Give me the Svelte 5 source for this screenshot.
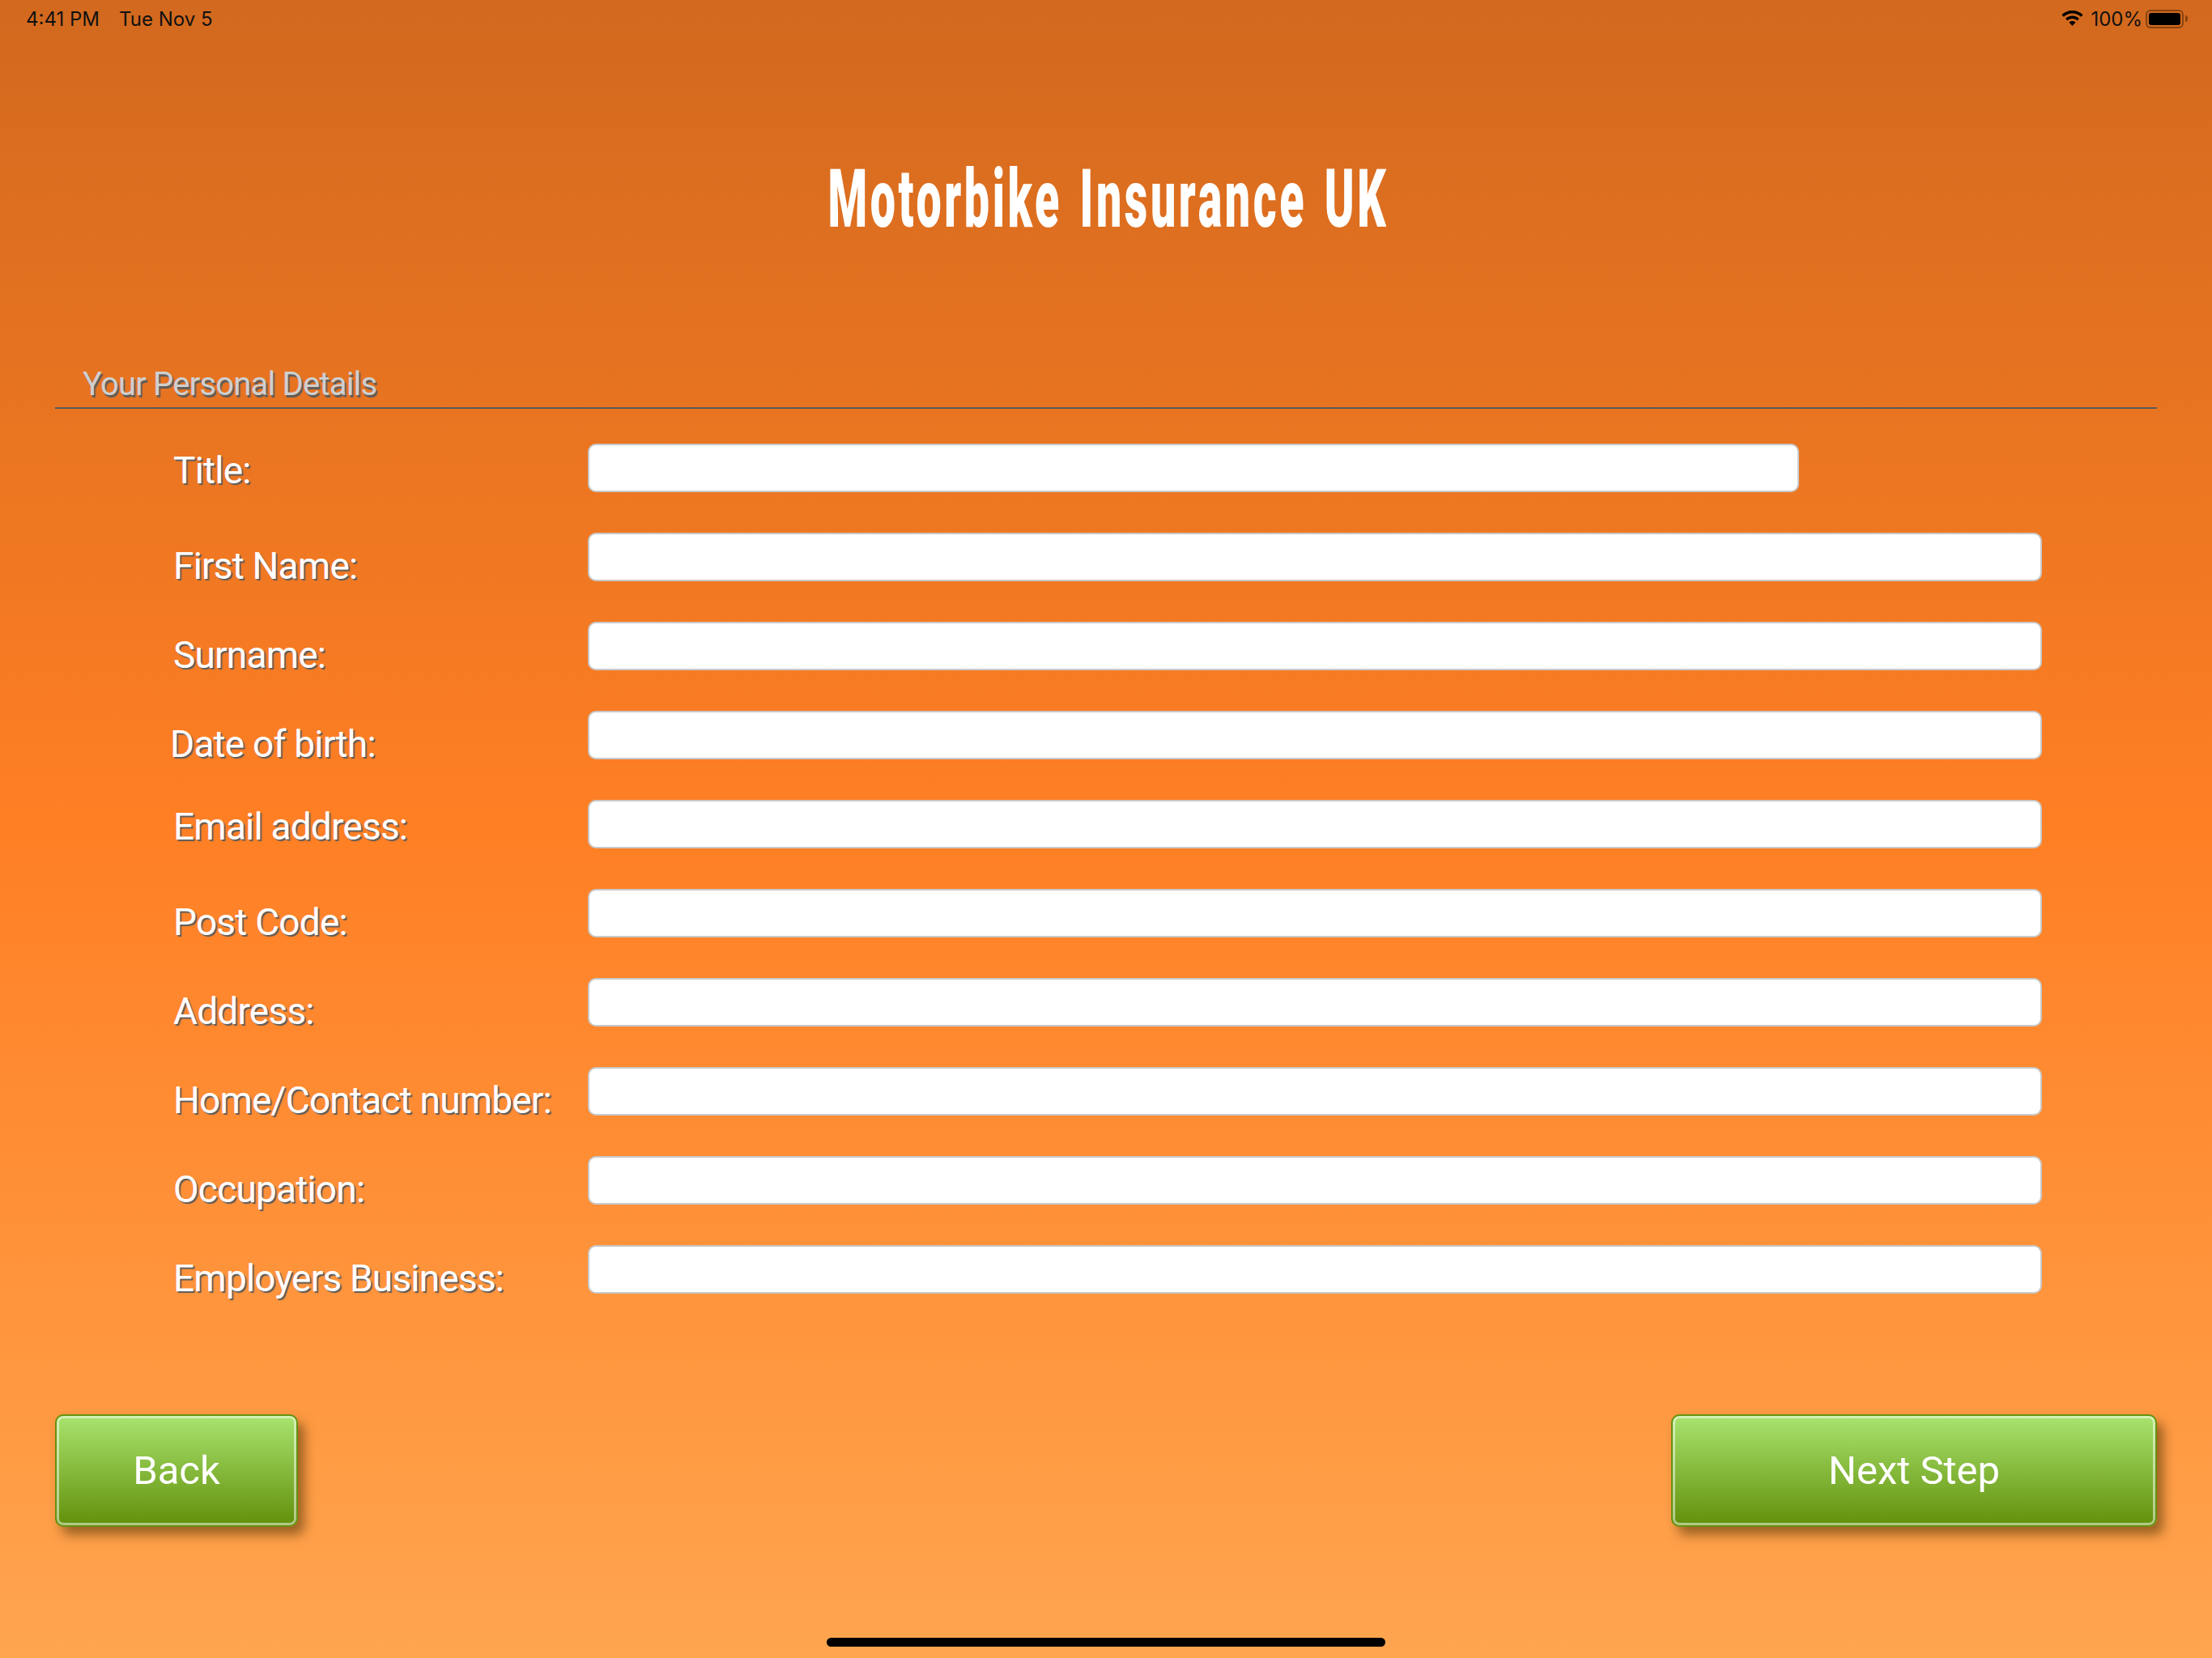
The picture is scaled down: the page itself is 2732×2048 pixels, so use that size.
<script>
  const rows = [
    { label: 'Title:', short: true, tight: true },
    { label: 'First Name:' },
    { label: 'Surname:' },
    { label: 'Date of birth:', nudge: true },
    { label: 'Email address:', tight: true },
    { label: 'Post Code:' },
    { label: 'Address:' },
    { label: 'Home/Contact number:' },
    { label: 'Occupation:' },
    { label: 'Employers Business:' }
  ];
</script>

<div class="page">
  <header class="status">
    <div class="status-left"><span>4:41 PM</span><span>Tue Nov 5</span></div>
    <div class="status-right">
      <svg class="wifi" width="27" height="20" viewBox="0 0 27 20" aria-hidden="true">
        <path d="M13.5 0C8.4 0 3.8 2 .4 5.2l2.4 2.5C5.6 5 9.4 3.4 13.5 3.4s7.900 1.600 10.700 4.300l2.400-2.500C23.200 2 18.600 0 13.500 0z"/>
        <path d="M13.500 6.600c-3.300 0-6.200 1.300-8.400 3.300l2.400 2.500c1.600-1.400 3.700-2.300 6-2.300s4.400.9 6 2.300l2.400-2.500c-2.200-2-5.100-3.300-8.400-3.300z"/>
        <path d="M13.500 13c-1.600 0-3 .6-4.100 1.600l4.100 4.400 4.100-4.400c-1.100-1-2.500-1.600-4.100-1.600z"/>
      </svg>
      <span class="pct">100%</span>
      <div class="battery"><div class="cell"></div></div>
      <div class="tip"></div>
    </div>
  </header>

  <h1 class="title"><span>Motorbike Insurance UK</span></h1>

  <div class="section">Your Personal Details</div>

  <form class="form">
    {#each rows as row}
      <div class="row">
        <label class="label" class:tight={row.tight} class:nudge={row.nudge}>{row.label}</label>
        <input class="field" class:short={row.short} type="text" />
      </div>
    {/each}
  </form>

  <footer class="actions">
    <button class="btn back" type="button">Back</button>
    <button class="btn next" type="button">Next Step</button>
  </footer>

  <div class="home"></div>
</div>

<style>
  :global(body) { margin: 0; }
  .page {
    width: 2732px;
    height: 2048px;
    overflow: hidden;
    display: flex;
    flex-direction: column;
    background: linear-gradient(180deg, #d2691e 0%, #ff7f24 50%, #ffa54f 100%);
    font-family: Roboto, "Liberation Sans", Arial, sans-serif;
  }
  .status {
    height: 50px;
    flex: none;
    display: flex;
    justify-content: space-between;
    align-items: center;
    padding: 0 30px 4px 32px;
    box-sizing: border-box;
    font-family: Inter, "Liberation Sans", sans-serif;
    font-size: 24px;
    color: #111;
  }
  .status-left { display: flex; gap: 24px; }
  .status-right { display: flex; align-items: center; }
  .wifi { fill: #000; margin-right: 9px; }
  .pct { margin-right: 4px; }
  .battery {
    width: 47px;
    height: 23px;
    box-sizing: border-box;
    border: 2px solid rgba(60, 30, 0, 0.5);
    border-radius: 6px;
    padding: 2px;
  }
  .cell { width: 100%; height: 100%; background: #000; border-radius: 3px; }
  .tip {
    width: 3px;
    height: 8px;
    margin-left: 2px;
    background: rgba(60, 30, 0, 0.5);
    border-radius: 0 3px 3px 0;
  }
  .title {
    margin: 150px 0 0;
    height: 92px;
    display: flex;
    justify-content: center;
    padding-left: 6px;
    font-family: Roboto, sans-serif;
    font-weight: 900;
    font-size: 101px;
    line-height: 92px;
    color: #fff;
  }
  .title span {
    display: inline-block;
    transform: scaleX(0.55);
    white-space: nowrap;
    letter-spacing: 6.5px;
    word-spacing: 8px;
  }
  .section {
    margin: 159px 68px 0;
    padding: 0 0 4px 34px;
    height: 48px;
    line-height: 48px;
    font-size: 40px;
    letter-spacing: -0.8px;
    color: #cfcfcf;
    text-shadow: 2px 3px 1px #5c5c5c;
    border-bottom: 2px solid #5a5a5a;
  }
  .form {
    margin: 43px 0 0 214px;
    display: flex;
    flex-direction: column;
  }
  .row {
    display: flex;
    align-items: flex-start;
    height: 110px;
  }
  .label {
    width: 512px;
    flex: none;
    padding-top: 11px;
    line-height: 60px;
    font-size: 46px;
    letter-spacing: -0.8px;
    color: #fff;
    text-shadow: 2px 2px 1px #5c5c5c;
    white-space: nowrap;
  }
  .label.tight { padding-top: 3px; }
  .label.nudge { margin-left: -4px; width: 516px; }
  .field {
    width: 1796px;
    height: 60px;
    box-sizing: border-box;
    background: #fff;
    border: 2px solid #c8c8c8;
    border-radius: 10px;
    padding: 0 12px;
    outline: none;
  }
  .field.short { width: 1496px; }
  .actions {
    margin: 99px 68px 0;
    display: flex;
    justify-content: space-between;
  }
  .btn {
    height: 139px;
    box-sizing: border-box;
    border: 2px solid #66920f;
    border-radius: 10px;
    background: linear-gradient(180deg, #a6e06a 4%, #65930f 96%);
    box-shadow: inset 0 0 0 3px rgba(255, 255, 255, 0.5), 8px 10px 14px rgba(60, 40, 0, 0.5);
    color: #fff;
    font-family: Roboto, "Liberation Sans", Arial, sans-serif;
    font-size: 49px;
    padding: 0;
  }
  .back { width: 300px; }
  .next { width: 600px; }
  .home {
    width: 690px;
    height: 11px;
    margin: 137px auto 0;
    background: #000;
    border-radius: 6px;
  }
</style>
